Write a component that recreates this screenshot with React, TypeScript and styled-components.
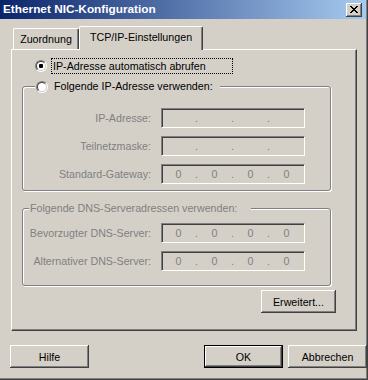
import React from 'react';
import styled, { createGlobalStyle } from 'styled-components';

const GlobalStyle = createGlobalStyle`
  html, body {
    margin: 0;
    padding: 0;
    background: #d4d0c8;
  }
  body {
    font-family: "Liberation Sans", Arial, sans-serif;
    font-size: 10.7px;
    line-height: 13px;
    color: #000;
  }
`;

const Window = styled.div`
  width: 368px;
  height: 380px;
  box-sizing: border-box;
  background: #d4d0c8;
  border-right: 1px solid #404040;
  border-bottom: 1px solid #404040;
  box-shadow: inset -1px -1px 0 #808080;
  display: flex;
  flex-direction: column;
`;

const TitleBar = styled.div`
  height: 19px;
  margin-right: 1px;
  padding: 0 4px 0 3px;
  background: linear-gradient(to right, #0a246a, #a6caf0);
  display: flex;
  align-items: center;
  justify-content: space-between;
`;

const Title = styled.span`
  color: #fff;
  font-weight: bold;
  font-size: 11.8px;
`;

const CloseButton = styled.button`
  width: 16px;
  height: 14px;
  padding: 0;
  border: none;
  background: #d4d0c8;
  box-shadow: inset -1px -1px 0 #404040, inset 1px 1px 0 #fff,
    inset -2px -2px 0 #808080;
  display: flex;
  align-items: center;
  justify-content: center;
`;

const Body = styled.div`
  flex: 1;
  display: flex;
  flex-direction: column;
  padding-top: 7px;
`;

const TabStrip = styled.div`
  display: flex;
  align-items: flex-end;
  height: 23px;
  padding-left: 13px;
`;

const Tab = styled.div<{ $active?: boolean; $width: number }>`
  width: ${p => p.$width}px;
  height: ${p => (p.$active ? 24 : 21)}px;
  margin-bottom: ${p => (p.$active ? -1 : 0)}px;
  box-sizing: border-box;
  position: relative;
  z-index: ${p => (p.$active ? 1 : 0)};
  background: #d4d0c8;
  border-top: 1px solid #fff;
  border-left: 1px solid #fff;
  border-right: 1px solid #404040;
  border-radius: 2px 2px 0 0;
  box-shadow: inset -1px 0 0 #808080;
  display: flex;
  align-items: center;
  justify-content: center;
  padding-bottom: ${p => (p.$active ? 2 : 0)}px;
`;

const Panel = styled.div`
  width: 346px;
  height: 282px;
  margin-left: 11px;
  box-sizing: border-box;
  border-top: 1px solid #fff;
  border-left: 1px solid #fff;
  border-right: 1px solid #404040;
  border-bottom: 1px solid #404040;
  box-shadow: inset -1px -1px 0 #808080;
  padding: 8px 0 0 10px;
  display: flex;
  flex-direction: column;
`;

const RadioRow = styled.div`
  display: flex;
  align-items: center;
  gap: 4px;
  height: 16px;
  margin-left: 13px;
`;

const FocusLabel = styled.span`
  width: 182px;
  height: 16px;
  box-sizing: border-box;
  border: 1px dotted #000;
  padding-left: 1px;
  display: flex;
  align-items: center;
`;

const RadioOuter = styled.span`
  width: 12px;
  height: 12px;
  box-sizing: border-box;
  flex-shrink: 0;
  border-radius: 50%;
  border: 1px solid;
  border-color: #808080 #fff #fff #808080;
  display: flex;
`;

const RadioInner = styled.span`
  flex: 1;
  border-radius: 50%;
  border: 1px solid;
  border-color: #404040 #d4d0c8 #d4d0c8 #404040;
  background: #fff;
  display: flex;
  align-items: center;
  justify-content: center;
`;

const RadioDot = styled.span`
  width: 4px;
  height: 4px;
  border-radius: 1px;
  background: #000;
`;

const GroupBox = styled.fieldset<{ $top: number; $padTop: number; $padBottom: number }>`
  width: 309px;
  box-sizing: border-box;
  min-width: 0;
  margin: ${p => p.$top}px 0 0 0;
  padding: ${p => p.$padTop}px 0 ${p => p.$padBottom}px 0;
  border: 1px solid #808080;
  border-radius: 3px;
  box-shadow: 1px 1px 0 #fff, inset 1px 1px 0 #fff;
  display: flex;
  flex-direction: column;
  gap: 8px;
`;

const Legend = styled.legend<{ $offset: number; $padRight: number; $disabled?: boolean }>`
  margin-left: ${p => p.$offset}px;
  padding: 0 ${p => p.$padRight}px 0 1px;
  height: 13px;
  background: #d4d0c8;
  color: ${p => (p.$disabled ? '#808080' : '#000')};
`;

const LegendContent = styled.span`
  display: inline-flex;
  align-items: center;
  gap: 6px;
  height: 13px;
`;

const FieldRow = styled.div`
  display: flex;
  align-items: center;
  gap: 10px;
  height: 20px;
`;

const FieldLabel = styled.span`
  width: 128px;
  text-align: right;
  color: #808080;
`;

const IpField = styled.div`
  width: 144px;
  height: 20px;
  box-sizing: border-box;
  border: 1px solid;
  border-color: #808080 #fff #fff #808080;
  box-shadow: inset 1px 1px 0 #404040, inset -1px -1px 0 #d4d0c8;
  background: #d4d0c8;
  display: flex;
  align-items: center;
  color: #808080;
`;

const IpSegment = styled.span`
  width: 33px;
  text-align: center;
`;

const IpDot = styled.span`
  width: 3px;
  text-align: center;
`;

const PanelButtonRow = styled.div`
  display: flex;
  justify-content: flex-end;
  margin: 4px 20px 0 0;
`;

const Button = styled.button<{ $default?: boolean; $width?: number }>`
  width: ${p => p.$width ?? 79}px;
  height: 23px;
  box-sizing: border-box;
  padding: 0;
  font-family: inherit;
  font-size: 10.7px;
  color: #000;
  background: #d4d0c8;
  border: ${p => (p.$default ? '1px solid #000' : 'none')};
  box-shadow: inset -1px -1px 0 #404040, inset 1px 1px 0 #fff,
    inset -2px -2px 0 #808080;
`;

const Footer = styled.div`
  display: flex;
  gap: 5px;
  margin-top: 14px;
  padding: 0 0 0 10px;
`;

const Spacer = styled.div`
  flex: 1;
`;

function Radio({ checked }: { checked?: boolean }) {
  return (
    <RadioOuter>
      <RadioInner>{checked && <RadioDot />}</RadioInner>
    </RadioOuter>
  );
}

function CloseGlyph() {
  return (
    <svg width="8" height="7" viewBox="0 0 8 7" shapeRendering="crispEdges">
      <path
        fill="#000"
        d="M0 0h2v1H0zM6 0h2v1H6zM1 1h2v1H1zM5 1h2v1H5zM2 2h4v1H2zM3 3h2v1H3zM2 4h4v1H2zM1 5h2v1H1zM5 5h2v1H5zM0 6h2v1H0zM6 6h2v1H6z"
      />
    </svg>
  );
}

function IpAddress({ value }: { value?: string[] }) {
  const parts = value ?? ['', '', '', ''];
  return (
    <IpField>
      {parts.map((part, index) => (
        <React.Fragment key={index}>
          <IpSegment>{part}</IpSegment>
          {index < 3 && <IpDot>.</IpDot>}
        </React.Fragment>
      ))}
    </IpField>
  );
}

const zero = ['0', '0', '0', '0'];

export default function App() {
  return (
    <>
      <GlobalStyle />
      <Window>
        <TitleBar>
          <Title>Ethernet NIC-Konfiguration</Title>
          <CloseButton>
            <CloseGlyph />
          </CloseButton>
        </TitleBar>

        <Body>
          <TabStrip>
            <Tab $width={66}>Zuordnung</Tab>
            <Tab $width={124} $active>TCP/IP-Einstellungen</Tab>
          </TabStrip>

          <Panel>
            <RadioRow>
              <Radio checked />
              <FocusLabel>IP-Adresse automatisch abrufen</FocusLabel>
            </RadioRow>

            <GroupBox $top={6} $padTop={15} $padBottom={6}>
              <Legend $offset={12} $padRight={7}>
                <LegendContent>
                  <Radio />
                  Folgende IP-Adresse verwenden:
                </LegendContent>
              </Legend>
              <FieldRow>
                <FieldLabel>IP-Adresse:</FieldLabel>
                <IpAddress />
              </FieldRow>
              <FieldRow>
                <FieldLabel>Teilnetzmaske:</FieldLabel>
                <IpAddress />
              </FieldRow>
              <FieldRow>
                <FieldLabel>Standard-Gateway:</FieldLabel>
                <IpAddress value={zero} />
              </FieldRow>
            </GroupBox>

            <GroupBox $top={11} $padTop={8} $padBottom={14}>
              <Legend $offset={6} $padRight={14} $disabled>
                Folgende DNS-Serveradressen verwenden:
              </Legend>
              <FieldRow>
                <FieldLabel>Bevorzugter DNS-Server:</FieldLabel>
                <IpAddress value={zero} />
              </FieldRow>
              <FieldRow>
                <FieldLabel>Alternativer DNS-Server:</FieldLabel>
                <IpAddress value={zero} />
              </FieldRow>
            </GroupBox>

            <PanelButtonRow>
              <Button $width={75}>Erweitert...</Button>
            </PanelButtonRow>
          </Panel>

          <Footer>
            <Button>Hilfe</Button>
            <Spacer />
            <Button $default>OK</Button>
            <Button>Abbrechen</Button>
          </Footer>
        </Body>
      </Window>
    </>
  );
}
